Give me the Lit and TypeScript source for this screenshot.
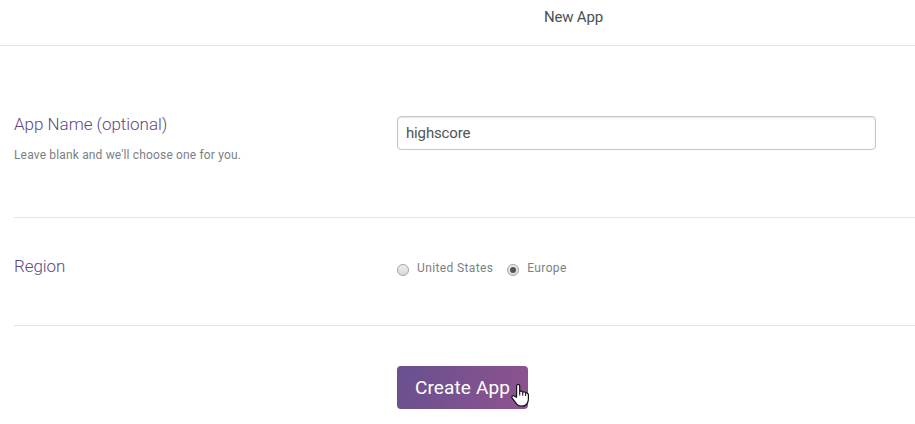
import { LitElement, html, css } from "lit";
import { customElement } from "lit/decorators.js";

@customElement("app-root")
export class AppRoot extends LitElement {
  static styles = css`
    :host { display: block; width: 915px; height: 424px; overflow: hidden; background: #fff;
      font-family: Roboto, "Open Sans", sans-serif; color: #7c7f84; }
    * { box-sizing: border-box; }
    header { height: 46px; border-bottom: 1px solid #e4e5e6; padding: 7px 0 0 544px;
      font-size: 15px; line-height: 20px; letter-spacing: -.2px; color: #4c4f53; white-space: nowrap; }
    form { margin-left: 14px; }
    .row { display: grid; grid-template-columns: 383px 479px; border-bottom: 1px solid #e4e5e6; align-items: start; }
    .name { height: 172px; padding-top: 70px; }
    .region { height: 108px; padding-top: 38px; }
    h2 { margin: 0; font-size: 17px; line-height: 20px; font-weight: 300; color: #5d4785; letter-spacing: -.1px; }
    .title { margin-top: -2px; letter-spacing: -.03px; }
    p { margin: 12px 0 0; font-size: 12px; line-height: 18px; letter-spacing: .16px; }
    .field { display: block; width: 479px; height: 34px; padding: 0 8px; border: 1px solid #c6c7c9; border-radius: 4px;
      box-shadow: inset 0 1px 2px #0000001c; outline: 0; background: #fff; color: #505357; font: 15px Roboto, sans-serif;
      letter-spacing: -.15px; }
    .choices { display: flex; align-items: center; height: 20px; margin-top: 2px; font-size: 12px; letter-spacing: .37px; }
    .choice { display: flex; align-items: center; height: 20px; }
    .choice + .choice { margin-left: 14px; }
    .dot { width: 12px; height: 12px; margin: 4px 8px 0 0; border: 1px solid #a5a5a5; border-radius: 50%;
      background: linear-gradient(#ededed, #d9d9d9); display: grid; place-items: center; }
    .dot.on::after { content: ""; width: 6px; height: 6px; border-radius: 50%; background: #555; }
    .actions { padding: 40px 0 0 383px; }
    .button { position: relative; display: block; width: 131px; height: 43px; padding: 0 0 0 18px; text-align: left;
      border: 0; border-radius: 4px; color: #fff; background: linear-gradient(110deg, #68508f, #8e538f);
      font: 19px Roboto, sans-serif; letter-spacing: .12px; white-space: nowrap; }
    .hand { position: absolute; left: 114px; top: 17px; display: block; }
  `;

  render() {
    return html`
      <header>New App</header>
      <form>
        <section class="row name">
          <div><h2 class="title">App Name (optional)</h2><p>Leave blank and we'll choose one for you.</p></div>
          <input class="field" type="text" .value=${"highscore"} aria-label="App Name" />
        </section>
        <section class="row region">
          <h2>Region</h2>
          <div class="choices">
            <span class="choice"><i class="dot"></i><span>United States</span></span>
            <span class="choice"><i class="dot on"></i><span>Europe</span></span>
          </div>
        </section>
        <div class="actions">
          <button class="button" type="button"><span>Create App</span>
            <svg class="hand" width="19" height="25" viewBox="0 0 19 25">
              <path d="M5.6 14.2V3.1c0-2.3 3.1-2.3 3.1 0V8.7c.6-1 2.7-.8 3 .6.8-.8 2.6-.5 2.9.9 1-.7 2.8 0 2.8 1.6v4.5c0 2-.6 3.2-1.5 4.5-1.1 1.7-2.8 2.4-5.6 2.4-2.3 0-3.5-.6-4.5-2L1.2 15.1c-1-1.7.7-3.1 2.2-2Z" fill="#fff" stroke="#17131d" stroke-width="1.2" stroke-linejoin="round" />
              <path d="M8.7 8.8v3.7M11.7 9.4v3.3M14.6 10.3v2.7" fill="none" stroke="#17131d" stroke-width="1.1" />
            </svg>
          </button>
        </div>
      </form>`;
  }
}
